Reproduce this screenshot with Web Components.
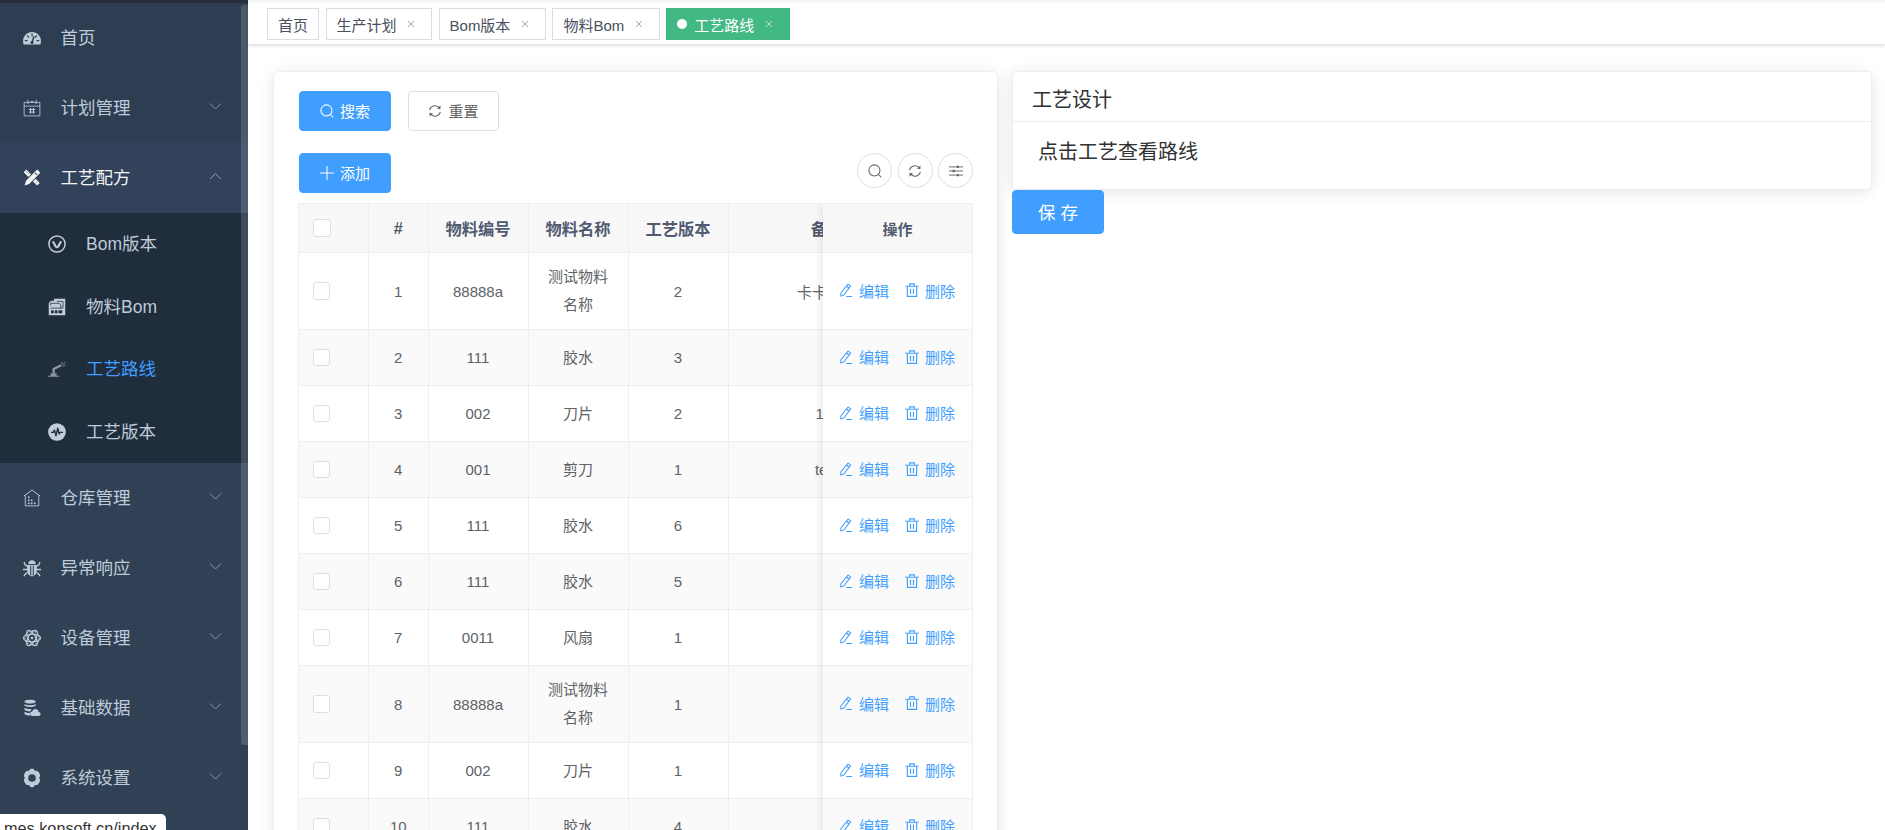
<!DOCTYPE html>
<html lang="zh-CN">
<head>
<meta charset="utf-8">
<title>工艺路线</title>
<style>
  html, body { margin: 0; height: 100%; overflow: hidden; background: #fff; }
  body { font-family: "Liberation Sans", "Noto Sans CJK SC", sans-serif; color: #606266; }
</style>
</head>
<body>

<app-shell>
  <side-menu slot="side">
    <menu-item icon="gauge" label="首页" class="tone"></menu-item>
    <menu-item icon="calendar" label="计划管理" arrow="down" class="tone"></menu-item>
    <menu-item icon="tools" label="工艺配方" arrow="up" open></menu-item>
    <sub-menu>
      <sub-item icon="vcircle" label="Bom版本"></sub-item>
      <sub-item icon="bomfile" label="物料Bom"></sub-item>
      <sub-item icon="robot" label="工艺路线" active></sub-item>
      <sub-item icon="pulse" label="工艺版本"></sub-item>
    </sub-menu>
    <menu-item icon="house" label="仓库管理" arrow="down"></menu-item>
    <menu-item icon="bug" label="异常响应" arrow="down"></menu-item>
    <menu-item icon="atom" label="设备管理" arrow="down"></menu-item>
    <menu-item icon="dbcloud" label="基础数据" arrow="down"></menu-item>
    <menu-item icon="gear" label="系统设置" arrow="down"></menu-item>
  </side-menu>

  <tag-bar slot="tags">
    <tag-item plain>首页</tag-item>
    <tag-item>生产计划</tag-item>
    <tag-item>Bom版本</tag-item>
    <tag-item>物料Bom</tag-item>
    <tag-item active>工艺路线</tag-item>
  </tag-bar>

  <route-page slot="main">
    <panel-card slot="left">
      <div style="display:flex;gap:17px;margin-bottom:22px">
        <ui-button kind="primary" icon="search">搜索</ui-button>
        <ui-button icon="refresh" style="width:91px">重置</ui-button>
      </div>
      <div style="display:flex;justify-content:space-between;align-items:flex-end;margin-bottom:10px">
        <ui-button kind="primary" icon="plus">添加</ui-button>
        <div style="display:flex;gap:5.5px;margin-bottom:5px">
          <round-button icon="search"></round-button>
          <round-button icon="refresh"></round-button>
          <round-button icon="sliders"></round-button>
        </div>
      </div>
      <route-table></route-table>
    </panel-card>
    <design-card slot="right" heading="工艺设计">点击工艺查看路线</design-card>
    <ui-button slot="right" kind="primary" big>保 存</ui-button>
  </route-page>
</app-shell>

<status-tip>mes.konsoft.cn/index</status-tip>

<script>
const FONT = '"Liberation Sans", "Noto Sans CJK SC", sans-serif';

// icons are all on a 24 box and use currentColor, --cut is the colour of the holes
const ICONS = {
  gauge: '<path fill="currentColor" d="M12 4C5.400 4 0 9.400 0 16c0 1.800.4 3.300 1 4.800h22c.6-1.500 1-3 1-4.800C24 9.400 18.600 4 12 4z"/><g stroke="var(--cut)" stroke-width="1.600" stroke-linecap="round"><path d="M12 6.500v2.400M6 9.300l1.500 1.600M18 9.300l-1.500 1.600M3 15.500h2.300M18.700 15.500h2.300"/><path stroke-width="2" d="M14.400 10.200 12.400 17"/></g><circle cx="12" cy="18" r="2" fill="var(--cut)"/>',
  calendar: '<path fill="none" stroke="currentColor" stroke-width="1.100" d="M1.500 4.500h21v18h-21zM1.500 9.500h21"/><path fill="none" stroke="currentColor" stroke-width="1.300" d="M6.500 1.500v5M17.500 1.500v5M10 3.500h4M8 14h8M8 17.500h8M10 12v7.500M14 12v7.500"/>',
  tools: '<path fill="currentColor" d="M19 .8 23.200 5 8.200 20 2 22l2-6.200z"/><path fill="var(--cut)" d="m16.500 4.600 2.900 2.900-.9.9-2.900-2.900z"/><path fill="currentColor" d="M4.400.8 1 4.200l6.300 6.300 3.400-3.400zM16.700 13.100l-3.400 3.400 5.600 5.600 3.400-3.400z"/><path stroke="var(--cut)" stroke-width="1" d="m4.600 3 1.600 1.600M7.200 5.600l1 1M17 17l1.200 1.200"/>',
  vcircle: '<circle cx="12" cy="12" r="10.800" fill="none" stroke="currentColor" stroke-width="2"/><path fill="none" stroke="currentColor" stroke-width="2.800" stroke-linejoin="round" d="m6.500 8.500 4 7c.7 1.100 2.200 1.100 3 0l4-7"/>',
  bomfile: '<path fill="currentColor" d="M8 1h15v22H1V6.500L4 3.500h4z"/><path fill="none" stroke="var(--cut)" stroke-width="1" d="M3.500 10V7h11.500l2 2.500v4M3.500 13.500h16.500V4.500h-8"/><g fill="var(--cut)"><rect x="4" y="16.500" width="3.600" height="3.800"/><rect x="9" y="16.500" width="3.600" height="3.800"/><rect x="14" y="16.500" width="5" height="3.800"/></g>',
  robot: '<path fill="currentColor" d="M0 21h15v1.300H0zM3.500 17.500h8V21h-8z"/><path fill="none" stroke="currentColor" stroke-width="3.200" stroke-linejoin="round" d="M7.500 17.500V12l10-5"/><path fill="none" stroke="currentColor" stroke-width="1.200" d="m18 7 5-4M19.500 8.500l4-2M17 4.500l2-1.500"/>',
  pulse: '<circle cx="12" cy="12" r="11.800" fill="currentColor"/><path fill="none" stroke="var(--cut)" stroke-width="1.800" stroke-linejoin="round" d="M4 12.500h3l1.600-3 2 7.500 2.400-10 1.800 7.500 1.200-2h4"/>',
  house: '<path fill="none" stroke="currentColor" stroke-width="1.200" d="M1 9.500 12 1.500l11 8M3 8.500v14h18v-14"/><g fill="currentColor"><rect x="6.500" y="10" width="2.200" height="2.200"/><rect x="6.500" y="14" width="2.200" height="2.200"/><rect x="6.500" y="18" width="2.200" height="2.200"/><rect x="10.500" y="14" width="2.200" height="2.200"/><rect x="10.500" y="18" width="2.200" height="2.200"/><rect x="14.500" y="18" width="2.200" height="2.200"/></g>',
  bug: '<path fill="currentColor" d="M7 6.500C7 3.500 9.200 1.500 12 1.500s5 2 5 5zM5.500 8h13v7c0 4.500-2.800 8-6.500 8s-6.500-3.500-6.500-8z"/><path stroke="var(--cut)" stroke-width="1.400" d="M10.300 9v13M13.700 9v13"/><path fill="none" stroke="currentColor" stroke-width="1.800" d="M6 10 2.500 7.500 1.500 4M18 10l3.500-2.500 1-3.500M6 14H0M18 14h6M6 18l-3.500 2.500L1.500 23M18 18l3.500 2.500 1 2.500"/>',
  atom: '<g fill="none" stroke="currentColor" stroke-width="1.500"><ellipse cx="12" cy="12" rx="11.500" ry="5"/><ellipse cx="12" cy="12" rx="11.500" ry="5" transform="rotate(60 12 12)"/><ellipse cx="12" cy="12" rx="11.500" ry="5" transform="rotate(120 12 12)"/><circle cx="12" cy="12" r="9.500" stroke-dasharray="2.500 1.500"/><circle cx="12" cy="12" r="5.500" stroke-dasharray="2 1.500"/></g><circle cx="12" cy="12" r="1.800" fill="currentColor"/>',
  dbcloud: '<path fill="currentColor" d="M2 3.500C2 2 6 1 9.500 1S17 2 17 3.500 13 6 9.500 6 2 5 2 3.500zM2 6.500C4 8 7 8.300 9.500 8.300S15 8 17 6.500V9c-2 1.300-4.500 1.700-7.500 1.700S4 10.300 2 9zM2 11.500c2 1.500 5 1.800 7.500 1.800.8 0 1.500 0 2.200-.1-1 .8-1.700 2-1.900 3.300H9.500c-3 0-5.500-.5-7.500-1.700zM2 17c2 1.200 4.500 1.700 7.500 1.700-.5 1-.5 2.300 0 3.300C6 22 2 21 2 19.500z"/><path fill="currentColor" d="M12.500 22.500a3 3 0 0 1-.3-6c.6-2 2.300-3.200 4.200-3.200 2.300 0 4.200 1.700 4.400 4 1.600.3 2.700 1.500 2.700 2.900 0 1.300-1 2.300-2.300 2.300z"/>',
  gear: '<g transform="translate(12 12) scale(1.130) translate(-12 -12)"><path fill="currentColor" fill-rule="evenodd" d="M12 .7c1.500 0 2.700 1 3.200 2.200l.3.700.8-.1c1.400-.2 2.800.4 3.600 1.700l1.200 2.100c.7 1.300.6 2.800-.3 3.900l-.5.600.5.700c.9 1.100 1 2.600.3 3.900l-1.200 2c-.8 1.300-2.200 2-3.600 1.800l-.8-.1-.3.7c-.5 1.300-1.700 2.100-3.200 2.100s-2.700-.8-3.200-2.100l-.3-.7-.8.1c-1.400.2-2.800-.5-3.600-1.800l-1.200-2c-.7-1.300-.6-2.800.3-3.900l.5-.7-.5-.6c-.9-1.100-1-2.600-.3-3.900l1.200-2.100c.8-1.300 2.200-1.900 3.600-1.700l.8.1.3-.7C9.300 1.700 10.500.7 12 .7zm0 6.800a4.500 4.500 0 1 0 0 9 4.500 4.500 0 0 0 0-9z"/></g>',
  search: '<circle cx="11" cy="11" r="9.500" fill="none" stroke="currentColor" stroke-width="1.800"/><path stroke="currentColor" stroke-width="1.800" d="m18 18 4.500 4.500"/>',
  refresh: '<g fill="none" stroke="currentColor" stroke-width="1.800"><path d="M2.800 10.500a9.400 9.400 0 0 1 15.700-4.700"/><path d="M21.200 13.500a9.400 9.400 0 0 1-15.700 4.700"/></g><path fill="currentColor" d="m21.500 2.500-.3 6.300-6-1zM2.500 21.500l.3-6.300 6 1z"/>',
  sliders: '<g stroke="currentColor" stroke-width="1.600"><path d="M0 5h24M0 12h24M0 19h24"/><path stroke-width="3.400" d="M15 3v4M8 10v4M15 17v4"/></g>',
  plus: '<path stroke="currentColor" stroke-width="1.800" d="M12 0v24M0 12h24"/>',
  edit: '<path fill="none" stroke="currentColor" stroke-width="1.800" stroke-linejoin="round" d="M15.500 1.800 19.800 5 8.500 20.500 3 22.500l.3-5.800z"/><path stroke="currentColor" stroke-width="1.800" d="M12.500 23h10M13 5.500 17 9"/>',
  trash: '<path fill="none" stroke="currentColor" stroke-width="1.900" d="M4 6.500v16.500h16V6.500M.5 5.500h23M8 5.500V1.500h8v4M9.500 10v9M14.500 10v9"/>',
  close: '<path stroke="currentColor" stroke-width="1.900" d="M3 3l18 18M21 3 3 21"/>'
};

class MesIcon extends HTMLElement {
  constructor() {
    super();
    this.attachShadow({ mode: 'open' });
  }
  connectedCallback() {
    const size = this.getAttribute('size') || 18;
    this.shadowRoot.innerHTML = `<style>
      :host { display: inline-flex; flex: none; width: ${size}px; height: ${size}px; }
      svg { width: 100%; height: 100%; display: block; overflow: visible; }
    </style><svg viewBox="0 0 24 24">${ICONS[this.getAttribute('name')] || ''}</svg>`;
  }
}
customElements.define('mes-icon', MesIcon);

class AppShell extends HTMLElement {
  constructor() {
    super();
    this.attachShadow({ mode: 'open' }).innerHTML = `<style>
      :host { display: flex; height: 830px; width: 1885px; overflow: hidden; font-family: ${FONT}; }
      .body { flex: 1; min-width: 0; display: flex; flex-direction: column; }
    </style>
    <slot name="side"></slot>
    <div class="body">
      <slot name="tags"></slot>
      <slot name="main"></slot>
    </div>`;
  }
}
customElements.define('app-shell', AppShell);

class SideMenu extends HTMLElement {
  constructor() {
    super();
    this.attachShadow({ mode: 'open' }).innerHTML = `<style>
      :host { display: block; position: relative; width: 248px; flex: none; height: 830px; overflow: hidden;
        background: #304156; border-top: 3px solid #282d39; box-sizing: border-box; }
      .thumb { position: absolute; left: 241px; top: 2px; width: 7px; height: 740px; border-radius: 3px 0 0 3px;
        background: rgba(255,255,255,.15); }
    </style><slot></slot><div class="thumb"></div>`;
  }
}
customElements.define('side-menu', SideMenu);

class MenuItem extends HTMLElement {
  constructor() {
    super();
    this.attachShadow({ mode: 'open' });
  }
  connectedCallback() {
    const arrow = this.getAttribute('arrow');
    const path = arrow === 'up' ? 'M1 7 6.500 1.500 12 7' : 'M1 1.500 6.500 7 12 1.500';
    this.shadowRoot.innerHTML = `<style>
      :host { display: flex; align-items: center; height: 70px; padding-left: 23px; padding-right: 26px;
        box-sizing: border-box; color: #bfcbd9; font-size: 17.500px; --cut: #304156; }
      :host([open]) { color: #f4f4f5; background: #31425a; --cut: #31425a; }
      :host(.tone) { background: #2d3e52; --cut: #2d3e52; }
      .label { margin-left: 19.500px; margin-bottom: 3px; flex: 1; }
      svg.arrow { width: 13px; height: 9px; margin-top: -4px; margin-right: 0; }
    </style>
    <mes-icon name="${this.getAttribute('icon')}" size="18"></mes-icon>
    <span class="label">${this.getAttribute('label')}</span>
    ${arrow ? `<svg class="arrow" viewBox="0 0 13 9"><path fill="none" stroke="#8b96a3" stroke-width="1" d="${path}"/></svg>` : ''}`;
  }
}
customElements.define('menu-item', MenuItem);

class SubMenu extends HTMLElement {
  constructor() {
    super();
    this.attachShadow({ mode: 'open' }).innerHTML = `<style>
      :host { display: block; background: #1f2d3d; }
    </style><slot></slot>`;
  }
}
customElements.define('sub-menu', SubMenu);

class SubItem extends HTMLElement {
  constructor() {
    super();
    this.attachShadow({ mode: 'open' });
  }
  connectedCallback() {
    const robot = this.getAttribute('icon') === 'robot';
    this.shadowRoot.innerHTML = `<style>
      :host { display: flex; align-items: center; height: 62.500px; padding-left: 48px;
        color: #bfcbd9; font-size: 17.500px; --cut: #1f2d3d; }
      :host([active]) { color: #409eff; }
      .ico { color: ${robot ? '#8f959b' : '#c3cdd8'}; display: flex; }
      .label { margin-left: 20px; margin-bottom: 3px; }
    </style>
    <span class="ico"><mes-icon name="${this.getAttribute('icon')}" size="18"></mes-icon></span>
    <span class="label">${this.getAttribute('label')}</span>`;
  }
}
customElements.define('sub-item', SubItem);

class TagBar extends HTMLElement {
  constructor() {
    super();
    this.attachShadow({ mode: 'open' }).innerHTML = `<style>
      :host { display: flex; gap: 6.500px; flex: none; height: 44px; box-sizing: border-box; padding: 5px 0 0 19px;
        background: #fff; border-top: 3px solid #f6f6f7; box-shadow: 0 1px 4px rgba(0,21,41,.2);
        position: relative; z-index: 2; }
    </style><slot></slot>`;
  }
}
customElements.define('tag-bar', TagBar);

class TagItem extends HTMLElement {
  constructor() {
    super();
    this.attachShadow({ mode: 'open' }).innerHTML = `<style>
      :host { display: inline-flex; align-items: center; height: 32px; box-sizing: border-box; padding: 0 10px;
        border: 1px solid #d8dce5; background: #fff; color: #495060; font-size: 15px; }
      :host([active]) { background: #42b983; border-color: #42b983; color: #fff; }
      .dot { display: none; width: 10px; height: 10px; border-radius: 50%; background: #fff; margin-right: 7px; }
      :host([active]) .dot { display: block; }
      .close { width: 20px; margin-left: 4.500px; display: flex; justify-content: center; color: #6f737b; }
      :host([active]) .close { color: #fff; }
      :host([plain]) .close { display: none; }
    </style>
    <span class="dot"></span><slot></slot>
    <span class="close"><mes-icon name="close" size="8"></mes-icon></span>`;
  }
}
customElements.define('tag-item', TagItem);

class RoutePage extends HTMLElement {
  constructor() {
    super();
    this.attachShadow({ mode: 'open' }).innerHTML = `<style>
      :host { display: grid; grid-template-columns: 725px 1fr; column-gap: 14px; flex: 1; min-height: 0;
        padding: 27px 13px 0 25px; overflow: hidden; background: #fff; }
      .right { display: flex; flex-direction: column; align-items: flex-start; }
    </style>
    <slot name="left"></slot>
    <div class="right"><slot name="right"></slot></div>`;
  }
}
customElements.define('route-page', RoutePage);

class PanelCard extends HTMLElement {
  constructor() {
    super();
    this.attachShadow({ mode: 'open' }).innerHTML = `<style>
      :host { display: block; box-sizing: border-box; height: 900px; padding: 19px 24px 0 25px; background: #fff;
        border: 1px solid #ebeef5; border-radius: 5px; box-shadow: 0 2px 15px rgba(0,0,0,.1); }
    </style><slot></slot>`;
  }
}
customElements.define('panel-card', PanelCard);

class DesignCard extends HTMLElement {
  constructor() {
    super();
    this.attachShadow({ mode: 'open' });
  }
  connectedCallback() {
    this.shadowRoot.innerHTML = `<style>
      :host { display: block; width: 100%; box-sizing: border-box; background: #fff; border: 1px solid #ebeef5;
        border-radius: 5px; box-shadow: 0 2px 15px rgba(0,0,0,.1); color: #303133; font-size: 20px; }
      .head { height: 50px; line-height: 50px; padding: 3px 0 0 19px; border-bottom: 1px solid #ebeef5; box-sizing: border-box; }
      .body { padding: 16px 25px 23px; line-height: 28px; }
    </style>
    <div class="head">${this.getAttribute('heading')}</div>
    <div class="body"><slot></slot></div>`;
  }
}
customElements.define('design-card', DesignCard);

class UiButton extends HTMLElement {
  constructor() {
    super();
    this.attachShadow({ mode: 'open' });
  }
  connectedCallback() {
    const icon = this.getAttribute('icon');
    this.shadowRoot.innerHTML = `<style>
      :host { display: inline-flex; align-items: center; justify-content: center; gap: 6px; box-sizing: border-box;
        width: 92px; height: 40px; padding-bottom: 2px; font-size: 15px; border-radius: 4px; background: #fff; color: #606266;
        border: 1px solid #dcdfe6; }
      :host([kind="primary"]) { background: #409eff; border-color: #409eff; color: #fff; }
      :host([big]) { height: 44px; font-size: 17.500px; }
      mes-icon { margin-top: 2px; }
    </style>
    ${icon ? `<mes-icon name="${icon}" size="14"></mes-icon>` : ''}<slot></slot>`;
  }
}
customElements.define('ui-button', UiButton);

class RoundButton extends HTMLElement {
  constructor() {
    super();
    this.attachShadow({ mode: 'open' });
  }
  connectedCallback() {
    this.shadowRoot.innerHTML = `<style>
      :host { display: flex; align-items: center; justify-content: center; width: 35px; height: 35px; box-sizing: border-box;
        border: 1px solid #dcdfe6; border-radius: 50%; color: #606266; background: #fff; }
    </style><mes-icon name="${this.getAttribute('icon')}" size="14"></mes-icon>`;
  }
}
customElements.define('round-button', RoundButton);

const ROWS = [
  ['1', '88888a', '测试物料名称', '2', '卡卡卡卡'],
  ['2', '111', '胶水', '3', ''],
  ['3', '002', '刀片', '2', '111'],
  ['4', '001', '剪刀', '1', 'test'],
  ['5', '111', '胶水', '6', ''],
  ['6', '111', '胶水', '5', ''],
  ['7', '0011', '风扇', '1', ''],
  ['8', '88888a', '测试物料名称', '1', ''],
  ['9', '002', '刀片', '1', ''],
  ['10', '111', '胶水', '4', '']
];

class RouteTable extends HTMLElement {
  constructor() {
    super();
    this.attachShadow({ mode: 'open' });
  }
  connectedCallback() {
    const rowClass = (r, i) => `row ${r[2].length > 4 ? 'tall' : ''} ${i % 2 ? 'odd' : ''}`;
    const body = ROWS.map((r, i) => `<div class="${rowClass(r, i)}">
      <div class="cell cb"><span class="box"></span></div>
      <div class="cell">${r[0]}</div>
      <div class="cell">${r[1]}</div>
      <div class="cell name">${r[2]}</div>
      <div class="cell">${r[3]}</div>
      <div class="cell">${r[4]}</div>
      <div class="cell"></div>
    </div>`).join('');
    const fixed = ROWS.map((r, i) => `<div class="${rowClass(r, i)} one">
      <div class="cell act">
        <span class="link"><mes-icon name="edit" size="14"></mes-icon>编辑</span>
        <span class="link"><mes-icon name="trash" size="14"></mes-icon>删除</span>
      </div>
    </div>`).join('');
    this.shadowRoot.innerHTML = `<style>
      :host { display: block; position: relative; overflow: hidden; height: 640px; width: 675px; margin-left: -1px;
        border-top: 1px solid #ebeef5; border-left: 1px solid #ebeef5; box-sizing: border-box;
        font-size: 15px; color: #606266; }
      .row { display: grid; grid-template-columns: 70px 59.500px 100px 100px 100px 198px 150px; width: 777.500px;
        height: 56px; box-sizing: border-box; border-bottom: 1px solid #ebeef5; background: #fff; }
      .row.tall { height: 77px; }
      .row.odd { background: #fafafa; }
      .row.head { height: 49px; background: #f8f8f9; color: #515a6e; font-size: 16.250px; font-weight: 700; }
      .cell { display: flex; align-items: center; justify-content: center; text-align: center; border-right: 1px solid #ebeef5;
        box-sizing: border-box; min-width: 0; white-space: nowrap; }
      .cell.cb { justify-content: flex-start; padding-left: 13.500px; }
      .cell.name { white-space: normal; line-height: 28px; padding: 0 14px; }
      .box { width: 17.500px; height: 17.500px; box-sizing: border-box; border: 1px solid #dcdfe6; border-radius: 3px; background: #fff; }
      .head .box { width: 18px; height: 18px; }
      .fixed { position: absolute; top: 0; right: 0; width: 150px; box-shadow: 0 0 10px rgba(0,0,0,.12); background: #fff; }
      .fixed .row { width: 150px; grid-template-columns: 150px; }
      .fixed .row.head { font-size: 15px; }
      .act { gap: 16px; justify-content: flex-start; padding: 0 0 2px 16px; color: #409eff; }
      .link { display: inline-flex; align-items: center; gap: 6px; }
    </style>
    <div class="row head">
      <div class="cell cb"><span class="box"></span></div>
      <div class="cell">#</div>
      <div class="cell">物料编号</div>
      <div class="cell">物料名称</div>
      <div class="cell">工艺版本</div>
      <div class="cell">备注</div>
      <div class="cell"></div>
    </div>
    ${body}
    <div class="fixed">
      <div class="row head"><div class="cell">操作</div></div>
      ${fixed}
    </div>`;
  }
}
customElements.define('route-table', RouteTable);

class StatusTip extends HTMLElement {
  constructor() {
    super();
    this.attachShadow({ mode: 'open' }).innerHTML = `<style>
      :host { position: fixed; left: 0; top: 814px; height: 16px; width: 166px; overflow: hidden; box-sizing: border-box;
        padding: 3px 0 0 4px; background: #fff; border-top-right-radius: 5px; color: #333;
        font: 16.250px/22px "Liberation Sans", sans-serif; white-space: nowrap; z-index: 10; }
    </style><slot></slot>`;
  }
}
customElements.define('status-tip', StatusTip);
</script>
</body>
</html>
